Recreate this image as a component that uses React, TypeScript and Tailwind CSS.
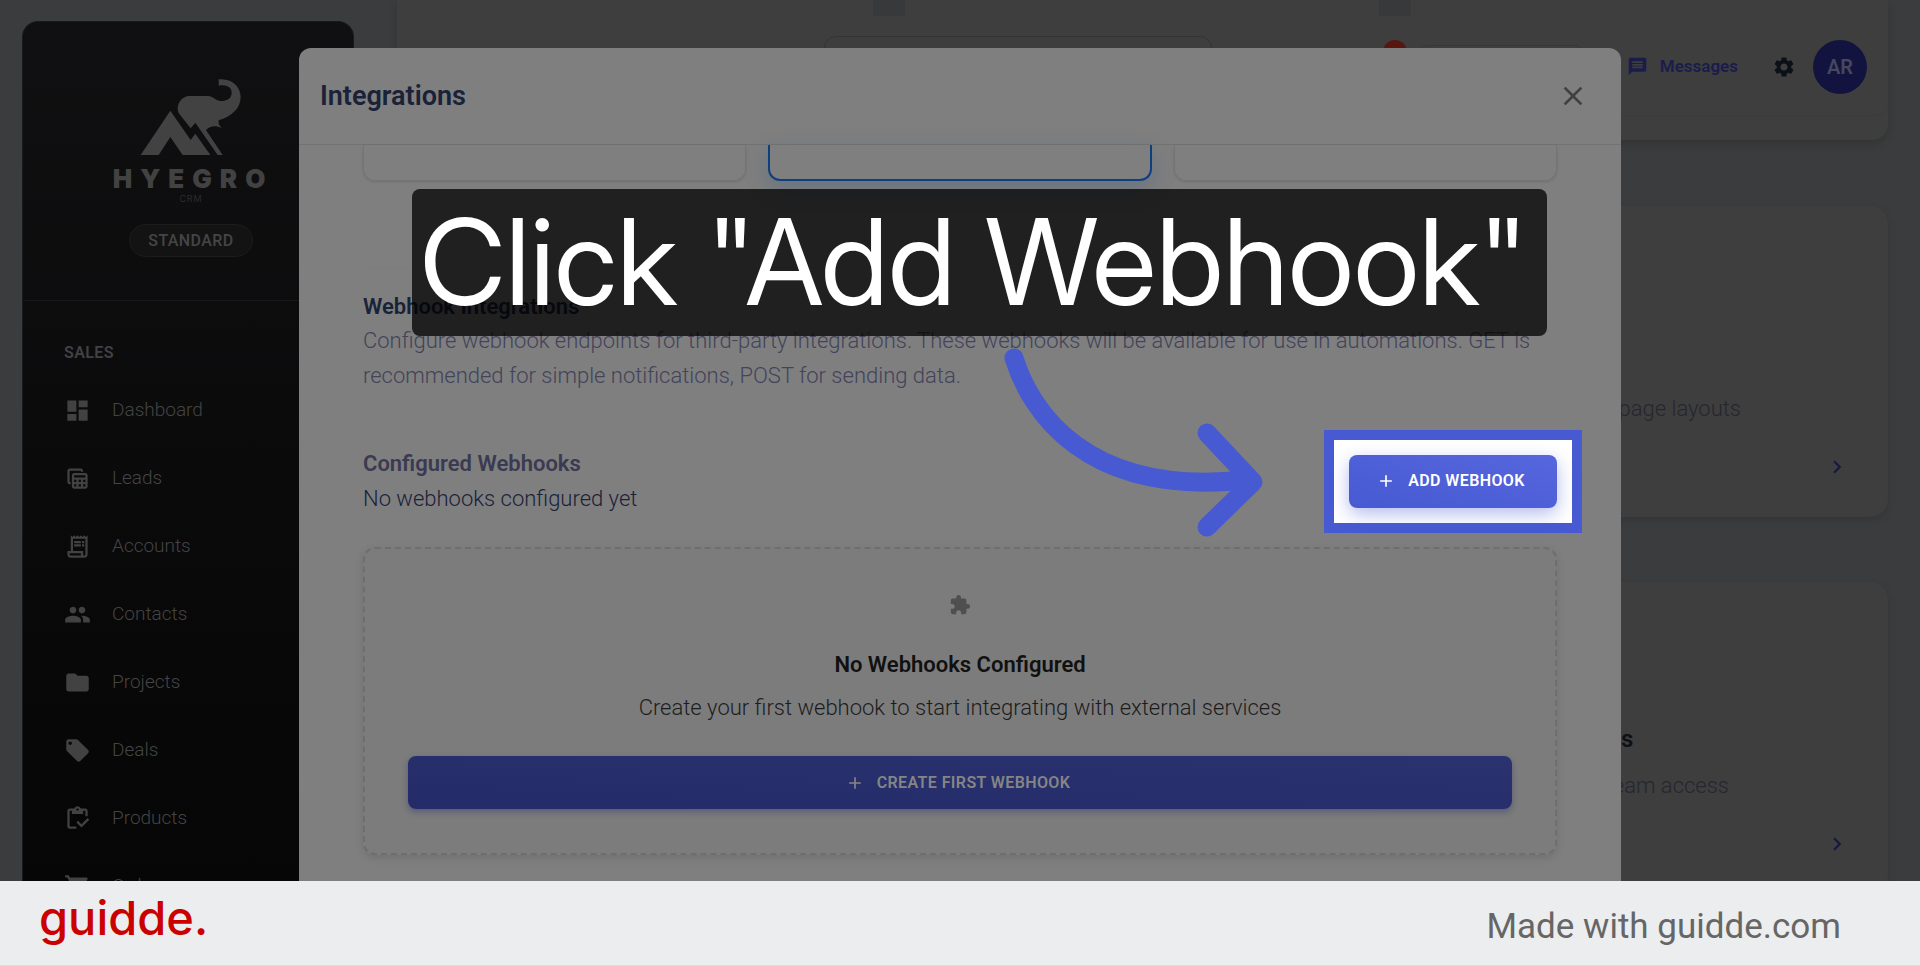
import { FC, ReactNode } from "react";
import {
  MdAdd,
  MdChevronRight,
  MdClose,
  MdDashboard,
  MdExtension,
  MdFolder,
  MdLocalOffer,
  MdMessage,
  MdOutlineInventory,
  MdOutlineReceiptLong,
  MdPeople,
  MdSettings,
  MdShoppingCart,
  MdTableView,
} from "react-icons/md";

const navs = [
  { text: "Dashboard", icon: MdDashboard },
  { text: "Leads", icon: MdTableView },
  { text: "Accounts", icon: MdOutlineReceiptLong },
  { text: "Contacts", icon: MdPeople },
  { text: "Projects", icon: MdFolder },
  { text: "Deals", icon: MdLocalOffer },
  { text: "Products", icon: MdOutlineInventory },
  { text: "Orders", icon: MdShoppingCart },
];

const Logo: FC = () => (
  <div className="flex flex-col items-center text-[#424242]">
    <svg className="w-[102px] h-[78px]" viewBox="422 234 306 234" fill="currentColor" aria-hidden="true">
      {/* Mountain */}
      <path d="M424 465L513 332L574 420L588 401L633 465H550L513 411L478 465Z" />
      {/* Elephant head and trunk */}
      <path d="M658 238C700 234 724 262 724 292C724 326 696 350 658 361C656 370 660 378 668 384C648 376 634 376 620 390L670 465H655L588 368L574 385L540 342C526 318 546 288 570 288H628C642 290 650 303 664 303C684 303 697 294 697 278C697 262 682 253 658 257Z" />
    </svg>
    <span className="mt-[7px] pl-1 font-['Inter',sans-serif] text-[26px] leading-8 font-black tracking-[8px]">HYEGRO</span>
    <span className="font-['Inter',sans-serif] text-[9px] leading-2 tracking-widest text-[#2c2c2c]">CRM</span>
  </div>
);

const Sidebar: FC = () => (
  <aside className="w-[332px] shrink-0 rounded-t-2xl bg-linear-to-b from-[#101012] to-[#060606] border-x border-t border-[#1a1a1c]">
    <div className="w-[332px] pl-1 pt-14 flex flex-col items-center">
      <Logo />
      <span className="mt-[21px] h-[33px] px-[18px] flex items-center rounded-full border border-[#1c1c1c] bg-[#131314] text-base font-medium tracking-wide text-[#454545]">
        STANDARD
      </span>
    </div>
    <hr className="mt-[43px] border-[#171717]" />
    <nav className="pl-[41px]">
      <h2 className="mt-10 text-base leading-6 font-semibold tracking-wide text-[#424242]">SALES</h2>
      <ul className="mt-[11px]">
        {navs.map((nav) => (
          <li key={nav.text}>
            <a href="#" className="h-[68px] flex items-center gap-[21px] text-[19px] font-light text-[#444]">
              <nav.icon className="size-[27px] text-[#424242]" />
              {nav.text}
            </a>
          </li>
        ))}
      </ul>
    </nav>
  </aside>
);

const TopBar: FC = () => (
  <header className="relative h-[140px] rounded-b-2xl bg-[#3e3e3e] shadow-[0_4px_8px_rgba(0,0,0,0.15)]">
    {/* Toolbar pieces that stay visible above the dialog */}
    <div className="absolute top-0 left-[476px] h-4 w-8 bg-[#38393b]" />
    <div className="absolute top-0 right-[477px] h-4 w-8 bg-[#38393b]" />
    <div className="absolute top-9 left-[427px] h-14 w-[388px] rounded-xl border border-[#343434]" />
    <div className="absolute top-10 right-[481px] size-6 rounded-full bg-[#57160f]" />
    <div className="absolute top-[45px] right-[305px] h-10 w-[163px] rounded-lg border border-[#373737]" />
    <div className="h-[116px] pt-[18px] pr-[21px] flex items-center justify-end rounded-b-xl border-b border-[#3b3b3b]">
      <button type="button" className="flex items-center gap-3 text-[17px] font-semibold text-[#1a1c4c]">
        <MdMessage className="size-[21px]" />
        Messages
      </button>
      <button type="button" aria-label="Settings" className="ml-[34px] text-[#0c1118]">
        <MdSettings className="size-6" />
      </button>
      <span className="ml-[17px] size-[54px] flex items-center justify-center rounded-full bg-[#12143f] text-xl font-semibold text-[#46465e]">
        AR
      </span>
    </div>
  </header>
);

const SettingsCard: FC<{ title?: string; text: string; className: string; textClassName: string }> = ({
  title,
  text,
  className,
  textClassName,
}) => (
  <section
    className={
      "pr-[38px] flex flex-col rounded-[18px] bg-[#3e3e3e] shadow-[0_3px_8px_rgba(0,0,0,0.12)] " + className
    }
  >
    <div className="ml-auto w-[229px] flex flex-col items-end">
      <h3 className="w-full h-[30px] text-2xl leading-[30px] font-semibold text-[#0c1118]">{title}</h3>
      <p className={"mt-4 text-[22px] leading-8 font-light whitespace-nowrap text-[#26262e] " + textClassName}>
        {text}
      </p>
    </div>
    <MdChevronRight className="mt-[29px] ml-auto size-[26px] text-[#17183f]" />
  </section>
);

const PrimaryButton: FC<{ children: ReactNode; className: string }> = ({ children, className }) => (
  <button
    type="button"
    className={
      "relative h-[53px] pr-[5px] flex items-center justify-center gap-3 rounded-lg bg-linear-to-tr text-base font-semibold tracking-wide " +
      className
    }
  >
    <MdAdd className="size-5" />
    {children}
  </button>
);

const Callout: FC = () => (
  <>
    <div className="absolute top-[141px] left-[113px] h-[147px] w-[1135px] pr-3 flex items-center justify-center rounded-lg bg-black/75 font-['Inter_Display','Inter',sans-serif] text-[119px] leading-none text-white whitespace-nowrap [font-variation-settings:'opsz'_32]">
      Click "Add Webhook"
    </div>
    <svg
      className="absolute top-[292px] left-[701px] w-[270px] h-[200px]"
      viewBox="1000 340 270 200"
      fill="none"
      stroke="#475ad1"
      strokeWidth="19"
      strokeLinecap="round"
      strokeLinejoin="round"
      aria-hidden="true"
    >
      <path d="M1014 358C1030 410 1085 497 1245 480" />
      <path d="M1207 433L1253 482L1207 527" />
    </svg>
  </>
);

const IntegrationsDialog: FC = () => (
  <div role="dialog" aria-label="Integrations" className="relative w-[1322px] rounded-t-xl bg-[#7f7f7f]">
    <div className="h-[97px] px-[21px] flex items-center justify-between border-b border-[#727272]">
      <h1 className="text-[27px] font-semibold text-[#1a2238]">Integrations</h1>
      <button type="button" aria-label="Close" className="p-[11px] text-[#404040]">
        <MdClose className="size-8" />
      </button>
    </div>

    <div className="px-16">
      <div className="grid grid-cols-3 gap-[22px]">
        <div className="h-9 rounded-b-xl border border-t-0 border-[#747474] shadow-sm" />
        <div className="h-9 rounded-b-xl border-2 border-t-0 border-[#0e3f80] shadow-[0_8px_24px_rgba(14,63,128,0.2)]" />
        <div className="h-9 rounded-b-xl border border-t-0 border-[#747474] shadow-sm" />
      </div>

      <hr className="mt-[86px] border-[#7d7d7d]" />

      <h2 className="mt-[22px] text-[22px] leading-[33px] font-semibold text-[#1a2238]">Webhook Integrations</h2>
      <p className="text-[22px] leading-[35px] font-light text-[#43435a]">
        Configure webhook endpoints for third-party integrations. These webhooks will be available for use in
        automations. GET is recommended for simple notifications, POST for sending data.
      </p>

      <div className="mt-[53px] flex items-center justify-between">
        <div className="text-[22px] leading-[35px]">
          <h3 className="font-semibold text-[#3a3a50]">Configured Webhooks</h3>
          <p className="font-light text-[#1a2238]">No webhooks configured yet</p>
        </div>
        <div className="relative">
          {/* Spotlight frame */}
          <div className="absolute -inset-[25px] border-[10px] border-[#475ad1] bg-white" />
          <PrimaryButton className="w-[208px] from-[#475ad1] to-[#5666de] text-white shadow-[0_6px_18px_rgba(71,90,209,0.4)]">
            ADD WEBHOOK
          </PrimaryButton>
        </div>
      </div>

      <div className="mt-[31px] px-[43px] py-11 flex flex-col items-center rounded-xl border-2 border-dashed border-[#6e6e6e] bg-[#7c7c7c] shadow-[0_3px_8px_rgba(0,0,0,0.12)]">
        <MdExtension className="mt-px size-[22px] text-[#4d504f]" />
        <h3 className="mt-[33px] text-[22px] leading-8 font-semibold text-[#111]">No Webhooks Configured</h3>
        <p className="mt-[11px] text-[22px] leading-8 font-light text-[#1c1c1c]">
          Create your first webhook to start integrating with external services
        </p>
        <PrimaryButton className="mt-8 w-full from-[#232c68] to-[#2a3270] text-[#858585] shadow-[0_3px_6px_rgba(35,44,104,0.4)]">
          CREATE FIRST WEBHOOK
        </PrimaryButton>
      </div>
    </div>
    <Callout />
  </div>
);

const App: FC = () => (
  <div className="h-screen flex flex-col overflow-hidden font-['Roboto',sans-serif]">
    <div className="relative flex-1 min-h-0 overflow-hidden bg-[#3b3c3d]">
      <div className="h-full flex gap-[43px] pl-[22px] pr-8">
        <div className="pt-[21px] flex">
          <Sidebar />
        </div>
        <main className="flex-1 min-w-0">
          <TopBar />
          <SettingsCard text="page layouts" className="mt-[66px] h-[311px] pt-[141px]" textClassName="pr-[109px]" />
          <SettingsCard
            title="s"
            text="eam access"
            className="mt-[65px] h-[311px] pt-[142px]"
            textClassName="pr-[121px]"
          />
        </main>
      </div>
      <div className="absolute inset-0 pt-12 flex justify-center">
        <IntegrationsDialog />
      </div>
    </div>

    <footer className="h-[85px] shrink-0 pl-[39px] pr-[79px] flex items-center justify-between border-b border-[#dcdde0] bg-[#ecedef]">
      <span className="pb-[11px] font-['Inter',sans-serif] text-[47px] leading-none font-medium text-[#cb0000]">
        guidde.
      </span>
      <a href="#" className="pt-[9px] text-[35px] text-[#666]">
        Made with guidde.com
      </a>
    </footer>
  </div>
);

export default App;
